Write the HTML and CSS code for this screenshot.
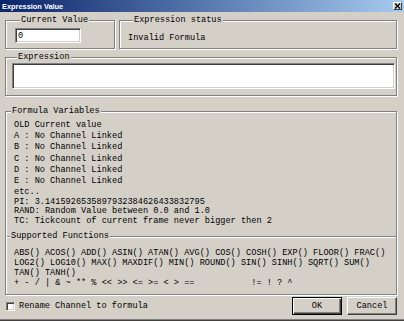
FILE: index.html
```html
<!DOCTYPE html>
<html>
<head>
  <meta charset="UTF-8" />
  <title>Expression Value</title>
  <link rel="stylesheet" href="styles.css">
</head>
<body>
  <div class="window">
    <!-- Title Bar -->
    <div class="titlebar">
      <span class="title">Expression Value</span>
      <span class="close-btn">
        <svg width="7" height="6" viewBox="0 0 7 6">
          <path d="M1 0.5 L6 5.5 M6 0.5 L1 5.5" stroke="#000" stroke-width="1.2" fill="none" />
        </svg>
      </span>
    </div>

    <div class="content">
      <!-- Value + status -->
      <div class="top-row">
        <fieldset class="group current-group">
          <legend>Current Value</legend>
          <input type="text" class="value-input" value="0">
        </fieldset>
        <fieldset class="group status-group">
          <legend>Expression status</legend>
          <div class="status-text">Invalid Formula</div>
        </fieldset>
      </div>

      <!-- Expression -->
      <fieldset class="group expr-group">
        <legend>Expression</legend>
        <textarea class="expr-input"></textarea>
      </fieldset>

      <!-- Variables + functions -->
      <fieldset class="group vars-group">
        <legend>Formula Variables</legend>
        <div class="var-list">
          <div>OLD Current value</div>
          <div>A : No Channel Linked</div>
          <div>B : No Channel Linked</div>
          <div>C : No Channel Linked</div>
          <div>D : No Channel Linked</div>
          <div>E : No Channel Linked</div>
          <div>etc..</div>
        </div>
        <div class="const-list">
          <div>PI: 3.1415926535897932384626433832795</div>
          <div>RAND: Random Value between 0.0 and 1.0</div>
        </div>
        <div class="tc-line">TC: Tickcount of current frame never bigger then 2</div>

        <div class="sub-header"><span>Supported Functions</span></div>
        <div class="func-list">
          <div>ABS() ACOS() ADD() ASIN() ATAN() AVG() COS() COSH() EXP() FLOOR() FRAC()</div>
          <div>LOG2() LOG10() MAX() MAXDIF() MIN() ROUND() SIN() SINH() SQRT() SUM()</div>
          <div>TAN() TANH()</div>
          <div class="ops">+ - / | &amp; ~ ** % &lt;&lt; &gt;&gt; &lt;= &gt;= &lt; &gt; ==           != ! ? ^</div>
        </div>
      </fieldset>

      <!-- Footer -->
      <div class="footer">
        <label class="check">
          <span class="checkbox"></span>
          <span>Rename Channel to formula</span>
        </label>
        <div class="buttons">
          <button class="btn default">OK</button>
          <button class="btn">Cancel</button>
        </div>
      </div>
    </div>
  </div>
</body>
</html>
```

FILE: styles.css
```css
body {
  margin: 0;
  font-family: "Liberation Mono", monospace;
  font-size: 8.6px;
  color: #000;
}
.window {
  width: 404px;
  height: 321px;
  box-sizing: border-box;
  background: #d4d0c8;
  box-shadow: inset 0 -1px 0 #404040, inset 0 -2px 0 #808080;
}
.titlebar {
  height: 12px;
  display: flex;
  align-items: center;
  justify-content: space-between;
  padding: 0 2px;
  background: linear-gradient(to right, #0a246a, #a6caf0);
}
.title {
  font-family: "Liberation Sans", Arial, sans-serif;
  font-weight: bold;
  font-size: 7.4px;
  color: white;
}
.close-btn {
  width: 9px;
  height: 8px;
  box-sizing: border-box;
  display: flex;
  align-items: center;
  justify-content: center;
  background: #d4d0c8;
  border: 1px solid;
  border-color: #fff #404040 #404040 #fff;
}
.content {
  padding: 4px 7px 0 5px;
}
.group {
  margin: 0;
  padding: 0;
  border: 1px solid #808080;
  box-shadow: 1px 1px 0 #fff, inset 1px 1px 0 #fff;
  min-width: 0;
}
.group legend {
  margin-left: 5px;
  padding: 0 1px;
  line-height: 9px;
  background: #d4d0c8;
}
.top-row {
  display: flex;
  gap: 4px;
}
.current-group {
  width: 110px;
  box-sizing: border-box;
  padding: 0 0 5px 9px;
}
.status-group {
  flex: 1;
  padding: 0 0 5px 8px;
}
.value-input, .expr-input {
  box-sizing: border-box;
  margin: 0;
  padding: 0 2px;
  font-family: "Liberation Mono", monospace;
  font-size: 8.6px;
  background: white;
  border: 1px solid;
  border-color: #808080 #fff #fff #808080;
  box-shadow: inset 1px 1px 0 #404040, inset -1px -1px 0 #d4d0c8;
  outline: none;
}
.value-input {
  display: block;
  width: 66px;
  height: 15px;
  margin-top: 3px;
}
.status-text {
  padding-top: 9px;
  line-height: 9px;
}
.expr-group {
  margin-top: 4px;
  padding: 0 1px 6px 6px;
}
.expr-input {
  display: block;
  width: 100%;
  height: 26px;
  margin-top: 1px;
  resize: none;
}
.vars-group {
  margin-top: 11px;
  padding: 4px 0 6px 0;
}
.var-list, .const-list, .tc-line, .func-list {
  padding-left: 8px;
  white-space: nowrap;
}
.var-list {
  line-height: 11.2px;
}
.const-list {
  line-height: 9px;
}
.tc-line {
  line-height: 11px;
}
.sub-header {
  display: flex;
  align-items: center;
  margin: 5px 0 0 1px;
  line-height: 9px;
}
.sub-header::before, .sub-header::after {
  content: "";
  height: 0;
  border-top: 1px solid #808080;
  border-bottom: 1px solid #fff;
}
.sub-header::before {
  width: 3px;
}
.sub-header::after {
  flex: 1;
}
.sub-header span {
  padding: 0 1px;
}
.func-list {
  margin-top: 7px;
  line-height: 10px;
}
.func-list .ops {
  white-space: pre;
}
.footer {
  display: flex;
  align-items: center;
  justify-content: space-between;
  margin-top: 2px;
  padding-left: 1px;
}
.check {
  display: flex;
  align-items: center;
  gap: 4px;
}
.checkbox {
  width: 9px;
  height: 9px;
  box-sizing: border-box;
  background: white;
  border: 1px solid;
  border-color: #808080 #fff #fff #808080;
  box-shadow: inset 1px 1px 0 #404040, inset -1px -1px 0 #d4d0c8;
}
.buttons {
  display: flex;
  gap: 5px;
}
.btn {
  width: 50px;
  height: 18px;
  padding: 0;
  font-family: "Liberation Mono", monospace;
  font-size: 8.6px;
  color: #000;
  background: #d4d0c8;
  border: 1px solid;
  border-color: #fff #404040 #404040 #fff;
  box-shadow: inset -1px -1px 0 #808080;
}
.btn.default {
  border-color: #000;
  box-shadow: inset 1px 1px 0 #fff, inset -1px -1px 0 #404040, inset -2px -2px 0 #808080;
}
```
